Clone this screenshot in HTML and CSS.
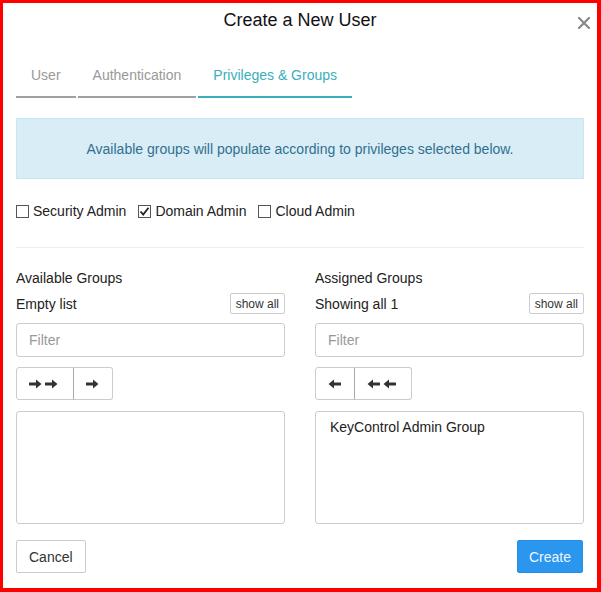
FILE: index.html
```html
<!DOCTYPE html>
<html>
<head>
<meta charset="utf-8">
<link rel="stylesheet" href="styles.css">
</head>
<body>
<div class="frame">
  <div class="header">
    <h1 class="title">Create a New User</h1>
    <button class="close" aria-label="Close">
      <svg width="12" height="12" viewBox="0 0 12 12"><path d="M1 1L11 11M11 1L1 11" stroke="#888" stroke-width="2.2" stroke-linecap="square"/></svg>
    </button>
  </div>
  <div class="tabs">
    <div class="tab">User</div>
    <div class="tab">Authentication</div>
    <div class="tab active">Privileges &amp; Groups</div>
  </div>
  <div class="alert">Available groups will populate according to privileges selected below.</div>
  <div class="checks">
    <label class="check"><span class="box"></span>Security Admin</label>
    <label class="check"><span class="box"><svg width="11" height="11" viewBox="0 0 11 11"><path d="M1.5 5.5L4.2 8.5L9.5 1.8" fill="none" stroke="#222" stroke-width="1.8"/></svg></span>Domain Admin</label>
    <label class="check"><span class="box"></span>Cloud Admin</label>
  </div>
  <hr class="divider">
  <div class="columns">
    <div class="col">
      <div class="col-title">Available Groups</div>
      <div class="info-row"><span>Empty list</span><button class="small-btn">show all</button></div>
      <div class="filter">Filter</div>
      <div class="btn-group">
        <button class="arrow-btn wide"><svg width="32" height="10" viewBox="0 0 32 10"><path d="M0 3.5H7V0.5L12.5 5L7 9.5V6.5H0Z M16 3.5H23V0.5L28.5 5L23 9.5V6.5H16Z" fill="#333"/></svg></button>
        <button class="arrow-btn"><svg width="14" height="10" viewBox="0 0 14 10"><path d="M0 3.5H7V0.5L12.5 5L7 9.5V6.5H0Z" fill="#333"/></svg></button>
      </div>
      <div class="listbox"></div>
    </div>
    <div class="col">
      <div class="col-title">Assigned Groups</div>
      <div class="info-row"><span>Showing all 1</span><button class="small-btn">show all</button></div>
      <div class="filter">Filter</div>
      <div class="btn-group">
        <button class="arrow-btn"><svg width="14" height="10" viewBox="0 0 14 10"><path d="M13 3.5H6V0.5L0.5 5L6 9.5V6.5H13Z" fill="#333"/></svg></button>
        <button class="arrow-btn wide"><svg width="32" height="10" viewBox="0 0 32 10"><path d="M13 3.5H6V0.5L0.5 5L6 9.5V6.5H13Z M29 3.5H22V0.5L16.5 5L22 9.5V6.5H29Z" fill="#333"/></svg></button>
      </div>
      <div class="listbox"><div class="item">KeyControl Admin Group</div></div>
    </div>
  </div>
  <div class="footer">
    <button class="btn">Cancel</button>
    <button class="btn primary">Create</button>
  </div>
</div>
</body>
</html>
```

FILE: styles.css
```css
* { box-sizing: border-box; }
html, body { margin: 0; padding: 0; background: #fff; }
body {
  font-family: "Liberation Sans", Arial, sans-serif;
  font-size: 14px;
  color: #333;
}
.frame {
  width: 601px;
  height: 592px;
  border-style: solid;
  border-color: #ff0000;
  border-width: 3px 4px 4px 3px;
  padding: 0 13px;
  display: flex;
  flex-direction: column;
}
.header {
  position: relative;
  padding-top: 7px;
  height: 52px;
}
.title {
  margin: 0;
  font-size: 18px;
  font-weight: normal;
  line-height: 20px;
  text-align: center;
  color: #111;
}
.close {
  position: absolute;
  right: -7px;
  top: 13px;
  border: 0;
  background: none;
  padding: 0;
  width: 14px;
  height: 14px;
  display: flex;
  align-items: center;
  justify-content: center;
}
.tabs {
  display: flex;
  gap: 2px;
}
.tab {
  padding: 10px 15px 11px;
  line-height: 20px;
  color: #999;
  border-bottom: 2px solid #a0a0a0;
}
.tab.active {
  color: #3aaebd;
  border-bottom-color: #3aaebd;
}
.alert {
  margin-top: 20px;
  height: 61px;
  background: #d9edf7;
  border: 1px solid #c6e6f0;
  color: #31708f;
  display: flex;
  align-items: center;
  justify-content: center;
}
.checks {
  margin-top: 22px;
  display: flex;
  gap: 12px;
  line-height: 20px;
  color: #222;
}
.check {
  display: flex;
  align-items: center;
  gap: 4px;
}
.box {
  width: 13px;
  height: 13px;
  border: 1px solid #555;
  background: #fff;
  display: flex;
  align-items: center;
  justify-content: center;
}
.divider {
  margin: 26px 0 0;
  border: 0;
  border-top: 1px solid #eee;
  height: 0;
}
.columns {
  display: grid;
  grid-template-columns: 269px 269px;
  gap: 30px;
  margin-top: 20px;
}
.col-title {
  line-height: 20px;
  color: #222;
}
.info-row {
  margin-top: 5px;
  display: flex;
  justify-content: space-between;
  align-items: center;
  height: 21px;
  color: #222;
}
.small-btn {
  font-family: inherit;
  font-size: 12px;
  color: #333;
  background: #fff;
  border: 1px solid #ccc;
  border-radius: 2px;
  height: 21px;
  padding: 0 5px;
}
.filter {
  margin-top: 9px;
  height: 34px;
  border: 1px solid #ccc;
  border-radius: 3px;
  padding: 0 12px;
  display: flex;
  align-items: center;
  color: #999;
}
.btn-group {
  margin-top: 10px;
  display: flex;
}
.arrow-btn {
  height: 33px;
  width: 40px;
  background: #fff;
  border: 1px solid #ccc;
  padding: 0;
  display: flex;
  align-items: center;
  justify-content: center;
}
.arrow-btn.wide { width: 58px; }
.btn-group .arrow-btn:first-child { border-radius: 3px 0 0 3px; }
.btn-group .arrow-btn:last-child { border-radius: 0 3px 3px 0; border-left: 1px solid #aaa; }
.btn-group .arrow-btn + .arrow-btn { margin-left: -1px; }
.listbox {
  margin-top: 11px;
  height: 113px;
  border: 1px solid #ccc;
  border-radius: 3px;
  padding: 5px 14px;
}
.item {
  line-height: 20px;
  color: #222;
}
.footer {
  margin-top: 16px;
  display: flex;
  justify-content: space-between;
}
.btn {
  font-family: inherit;
  font-size: 14px;
  height: 33px;
  padding: 0 12px;
  background: #fff;
  border: 1px solid #ccc;
  border-radius: 2px;
  color: #333;
}
.btn.primary {
  background: #2b96ee;
  border-color: #2690e6;
  color: #eef7ff;
  margin-right: 1px;
  padding: 0 11px;
}
```
